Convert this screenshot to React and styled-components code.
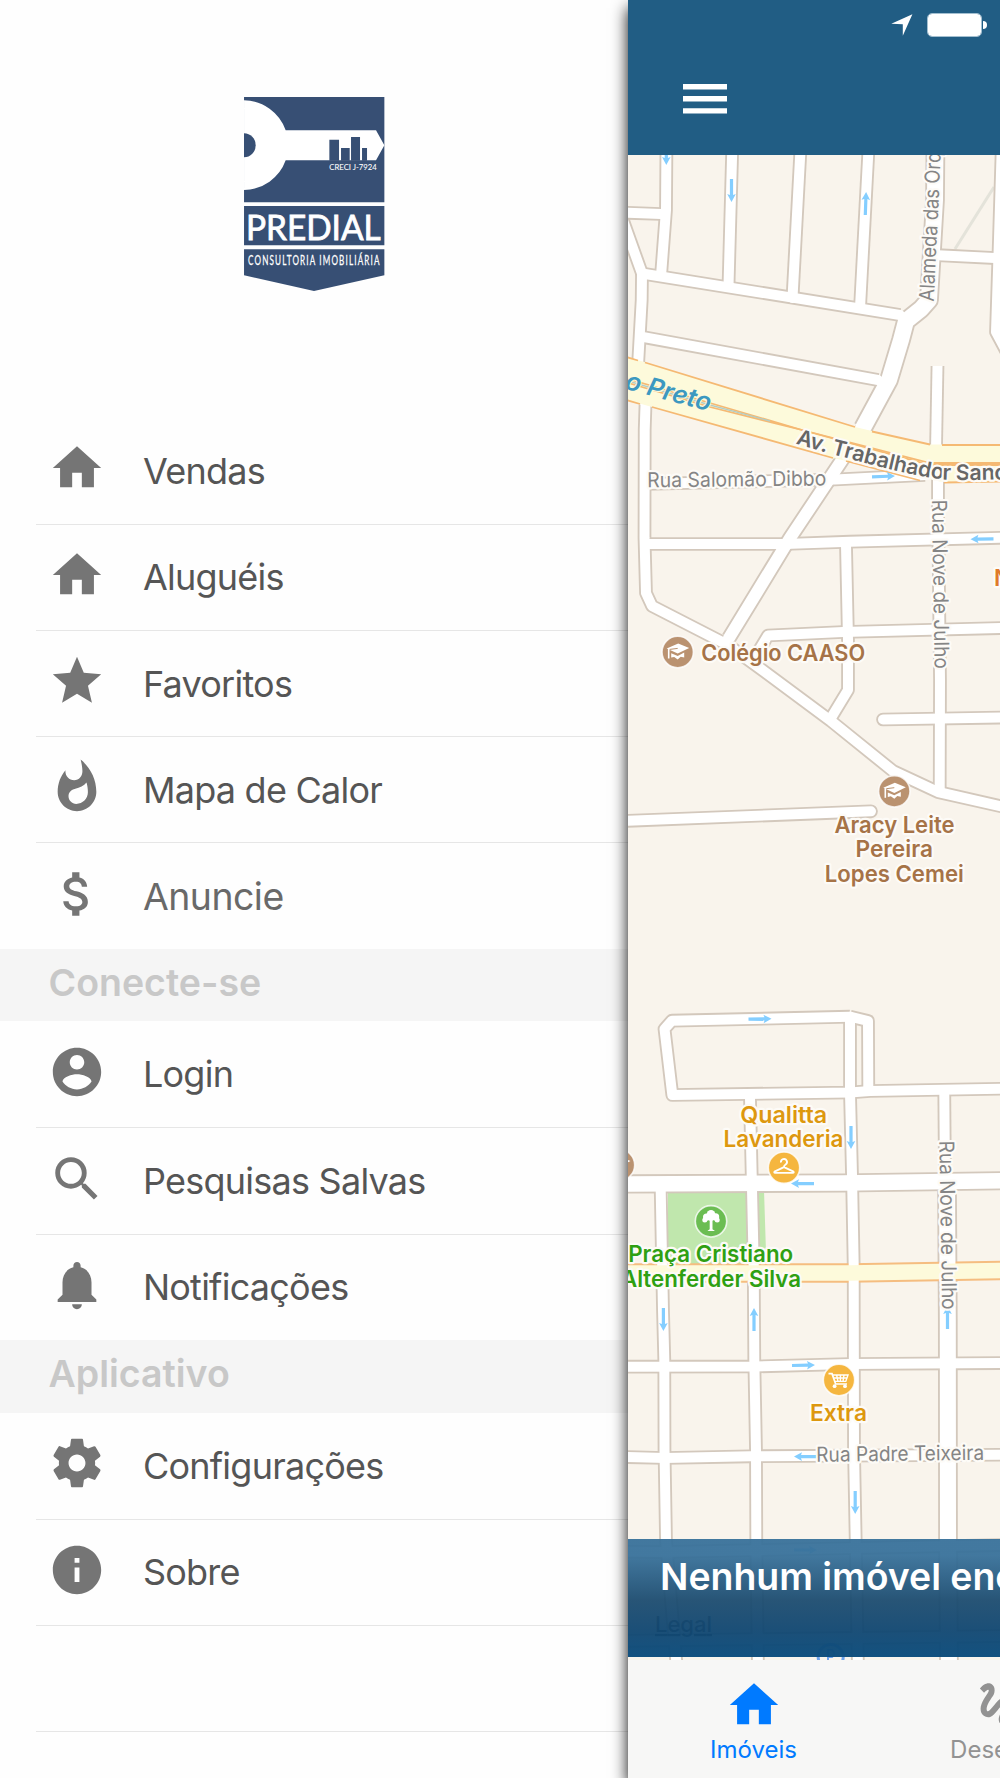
import React from "react";
import styled, { createGlobalStyle } from "styled-components";
import {
	MdHome,
	MdStar,
	MdAttachMoney,
	MdSearch,
	MdInfo,
	MdGesture,
} from "react-icons/md";

const FlameIcon = () => (
	<svg viewBox="0 0 24 24" fill="currentColor">
		<path d="M13.5.67s.74 2.65.74 4.8c0 2.06-1.35 3.73-3.41 3.73-2.07 0-3.63-1.67-3.63-3.73l.03-.36C5.21 7.51 4 10.62 4 14c0 4.42 3.58 8 8 8s8-3.58 8-8C20 8.61 17.41 3.8 13.5.67zM11.71 19c-1.78 0-3.22-1.4-3.22-3.14 0-1.62 1.05-2.76 2.81-3.12 1.77-.36 3.6-1.21 4.62-2.58.39 1.29.59 2.65.59 4.04 0 2.65-2.15 4.8-4.8 4.8z" />
	</svg>
);

const AccountIcon = () => (
	<svg viewBox="0 0 24 24" fill="currentColor">
		<path d="M12 2C6.48 2 2 6.48 2 12s4.48 10 10 10 10-4.48 10-10S17.52 2 12 2zm0 3c1.66 0 3 1.34 3 3s-1.34 3-3 3-3-1.34-3-3 1.34-3 3-3zm0 14.2c-2.5 0-4.71-1.28-6-3.22.03-1.99 4-3.08 6-3.08 1.99 0 5.97 1.09 6 3.08-1.29 1.94-3.5 3.22-6 3.22z" />
	</svg>
);

const BellIcon = () => (
	<svg viewBox="0 0 24 24" fill="currentColor">
		<path d="M12 22c1.1 0 2-.9 2-2h-4c0 1.1.89 2 2 2zm6-6v-5c0-3.07-1.64-5.64-4.5-6.32V4c0-.83-.67-1.5-1.5-1.5s-1.5.67-1.5 1.5v.68C7.63 5.36 6 7.92 6 11v5l-2 2v1h16v-1l-2-2z" />
	</svg>
);

const GearIcon = () => (
	<svg viewBox="0 0 24 24" fill="currentColor">
		<path d="M19.43 12.98c.04-.32.07-.64.07-.98s-.03-.66-.07-.98l2.11-1.65c.19-.15.24-.42.12-.64l-2-3.46c-.12-.22-.39-.3-.61-.22l-2.49 1c-.52-.4-1.08-.73-1.69-.98l-.38-2.65C14.46 2.18 14.25 2 14 2h-4c-.25 0-.46.18-.49.42l-.38 2.65c-.61.25-1.17.59-1.69.98l-2.49-1c-.23-.09-.49 0-.61.22l-2 3.46c-.13.22-.07.49.12.64l2.11 1.65c-.04.32-.07.65-.07.98s.03.66.07.98l-2.11 1.65c-.19.15-.24.42-.12.64l2 3.46c.12.22.39.3.61.22l2.49-1c.52.4 1.08.73 1.69.98l.38 2.65c.03.24.24.42.49.42h4c.25 0 .46-.18.49-.42l.38-2.65c.61-.25 1.17-.59 1.69-.98l2.49 1c.23.09.49 0 .61-.22l2-3.46c.12-.22.07-.49-.12-.64l-2.11-1.65zM12 15.5c-1.93 0-3.5-1.57-3.5-3.5s1.57-3.5 3.5-3.5 3.5 1.57 3.5 3.5-1.57 3.5-3.5 3.5z" />
	</svg>
);

const sections = [
	{
		items: [
			{ label: "Vendas", icon: <MdHome /> },
			{ label: "Aluguéis", icon: <MdHome /> },
			{ label: "Favoritos", icon: <MdStar /> },
			{ label: "Mapa de Calor", icon: <FlameIcon /> },
			{ label: "Anuncie", icon: <MdAttachMoney />, muted: true },
		],
	},
	{
		title: "Conecte-se",
		items: [
			{ label: "Login", icon: <AccountIcon /> },
			{ label: "Pesquisas Salvas", icon: <MdSearch /> },
			{ label: "Notificações", icon: <BellIcon /> },
		],
	},
	{
		title: "Aplicativo",
		items: [
			{ label: "Configurações", icon: <GearIcon /> },
			{ label: "Sobre", icon: <MdInfo /> },
			{ label: "", icon: null },
			{ label: "", icon: null },
		],
	},
];

// [path, white width]
const roads = [
	["M666.5 140L666 210L661 276", 10],
	["M732.5 140L728.5 286", 10],
	["M801 140L792.5 298", 10],
	["M869 140L860 308", 10],
	["M935.5 140L935 200L929 300L921 309L906 321L901 340L889 380L863 428", 16],
	["M863 428L840 463L790 538L729 638", 12],
	["M642 273.5L900 315", 10],
	["M620 212.5L661 214", 10],
	["M620 212L642 273.5", 10],
	["M642 273L641.7 300L638 366", 10],
	["M645.5 405L644.7 430L644.5 538L646 593L652 606L728 645L765 672L831 721L893 771L938 792L1004 807", 10],
	["M644 337.2L878 380", 10],
	["M645 484L835 479.5L925 475", 10],
	["M937.5 366L936 450", 10],
	["M938 478L938 500L940 680L939.7 790", 10],
	["M645 544L785 544L850 541.7L1004 537.7", 10],
	["M846 545L848 640L848 690L831 718", 10],
	["M752 662L768 635.5L843 632L1004 628", 10],
	["M883 719.5L1004 717.5", 10],
	["M618 821.2L871 811.3", 10],
	["M850 1016.7L868 1021L868.3 1090", 10],
	["M850 1016.7L672 1020.7L664.5 1029L672.3 1095L850 1092.5L870 1091L1004 1088.7", 10],
	["M850 1018L850 1093L852 1175L853.7 1265L854 1450L855.7 1540L858 1670", 10],
	["M750 1098L751.7 1175L753.7 1265L754.3 1360L756 1450L756.3 1540L758 1670", 10],
	["M660.7 1190L663 1310L664.3 1360L664.5 1450L666 1540L671 1600L677 1670", 10],
	["M944.3 1095L945 1180", 10],
	["M947 1186L947.8 1320L948 1540L949 1670", 16],
	["M618 1184L843 1183L1004 1180.7", 15.5],
	["M618 1366.7L755 1366.5L850 1364L1004 1363", 10],
	["M618 1456.8L665 1458L750 1456.3L1004 1454.7", 10],
	["M618 1551.7L665 1552L1004 1545", 10],
	["M618 1641L1004 1636", 10],
	["M938 255.2L1004 258.5", 10],
	["M1002 140L998.5 255L996 332L1012 362", 10],
];

// x, y of the tail and the heading in degrees
const arrows = [
	[666.3, 142, 90],
	[731.5, 179, 90],
	[865.3, 215, -88],
	[872, 476.8, -2],
	[993.5, 538.8, 179],
	[748.5, 1019.2, -1],
	[851, 1126, 90],
	[814, 1183.6, 180],
	[663.4, 1308, 90],
	[754, 1331, -90],
	[947.5, 1329, -90],
	[792, 1365.5, -1],
	[817, 1456.6, 180],
	[855.2, 1491, 90],
	[794, 1550, 0],
];

const labels = [
	{ text: "Colégio CAASO", x: 783.2, y: 660.9, w: 164, color: "#a67347" },
	{ text: "Aracy Leite", x: 894.5, y: 832.9, w: 120, color: "#a67347" },
	{ text: "Pereira", x: 894.2, y: 857.4, w: 77.5, color: "#a67347" },
	{ text: "Lopes Cemei", x: 894.3, y: 881.6, w: 139, color: "#a67347" },
	{ text: "Qualitta", x: 783.7, y: 1123, w: 87, color: "#dd980f" },
	{ text: "Lavanderia", x: 783.5, y: 1147.3, w: 120, color: "#dd980f" },
	{ text: "Praça Cristiano", x: 710.7, y: 1261.7, w: 165, color: "#2fa012" },
	{ text: "Altenferder Silva", x: 711, y: 1286.7, w: 180, color: "#2fa012" },
	{ text: "Extra", x: 838.5, y: 1421, w: 57, color: "#dd980f" },
];

const streets = [
	{ text: "Rua Salomão Dibbo", x: 647.3, y: 487.3, rotate: -0.6, w: 179 },
	{ text: "Rua Padre Teixeira", x: 816.3, y: 1461.8, rotate: -0.7, w: 168 },
	{ text: "Rua Nove de Julho", x: 932, y: 499.8, rotate: 89.1, w: 169 },
	{ text: "Rua Nove de Julho", x: 939.3, y: 1140.8, rotate: 89, w: 169 },
	{ text: "Alameda das Orq", x: 933.8, y: 301.8, rotate: -87.3, w: 150 },
];

const CapGlyph = () => (
	<g>
		<path d="M-11 -3.6L0.5 -8.6L11.5 -4L0 1.6Z" fill="#fff" />
		<path d="M-6.5 1.2L0 4L6.5 .6V5.5L3 4.8L0 7.5L-3.5 5L-6.5 5.6Z" fill="#fff" />
		<path d="M-9 -3V6.5" stroke="#fff" strokeWidth="1.6" />
		<path d="M-8 -2.6L0 -3.6" stroke="#ba9270" strokeWidth="1" />
	</g>
);

const HangerGlyph = () => (
	<path
		d="M-3 -5.2A3 3 0 1 1 1.6 -3.2Q0 -2.3 0 -.6L9 3.6Q10.6 5 8.6 5.2H-8.6Q-10.6 5 -9 3.6L0 -.6"
		fill="none"
		stroke="#fff"
		strokeWidth="1.9"
		strokeLinejoin="round"
	/>
);

const TreeGlyph = () => (
	<g fill="#fff">
		<circle cx="0" cy="-7" r="4.3" />
		<circle cx="-4.4" cy="-4.2" r="3.6" />
		<circle cx="4.6" cy="-4.4" r="3.6" />
		<circle cx="-6.2" cy="-1.4" r="2.5" />
		<circle cx="6.2" cy="-1.2" r="2.5" />
		<circle cx="0" cy="-3.4" r="3" />
		<path d="M-1.3 -3H1.5V8L4 9.8H-3.6L-1.3 8Z" />
	</g>
);

const CartGlyph = () => (
	<g fill="none" stroke="#fff" strokeWidth="1.7">
		<path d="M-10.5 -6.4H-7L-3.4 4H8" />
		<path d="M-6.5 -5H9L6.8 1.4H-4.4M-5.6 -2H8M-2.4 -5L-1 1.4M1.4 -5V1.4M5 -5L4 1.4" strokeWidth="1.4" />
		<circle cx="-4.4" cy="6.2" r="1.9" fill="#fff" stroke="none" />
		<circle cx="6" cy="6.2" r="1.9" fill="#fff" stroke="none" />
	</g>
);

const pins = [
	{ x: 677.7, y: 652, color: "#ba9270", glyph: <CapGlyph /> },
	{ x: 894.3, y: 791.3, color: "#ba9270", glyph: <CapGlyph /> },
	{ x: 619, y: 1165, color: "#ba9270", glyph: <CapGlyph /> },
	{ x: 784, y: 1167.7, color: "#f5b63f", glyph: <HangerGlyph /> },
	{ x: 711, y: 1221.3, color: "#6bbd52", glyph: <TreeGlyph /> },
	{ x: 839, y: 1380, color: "#f5b63f", glyph: <CartGlyph /> },
];

const Logo = () => (
	<LogoSvg viewBox="0 0 421 582">
		<g fill="#374f74">
			<path d="M0 0H421V316H0Z" />
			<path d="M0 327H421V445H0Z" />
			<path d="M0 457H421V535L210 582L0 535Z" />
		</g>
		<path d="M0 10A134.5 134.5 0 0 1 125 100H396L421 145L396 190H125A134.5 134.5 0 0 1 0 279Z" fill="#fff" />
		<path d="M0 109A35 36 0 0 1 0 181Z" fill="#374f74" />
		<path d="M256 191V128H285V191ZM291 191V153H317V191ZM321 191V120H348V191ZM354 191V153H369V191Z" fill="#374f74" />
		<LogoText x="256" y="220" fontSize="24" textLength="142" strokeWidth="0.2">
			CRECI J-7924
		</LogoText>
		<LogoText x="6" y="430" fontSize="106" textLength="404" strokeWidth="2.5">
			PREDIAL
		</LogoText>
		<LogoText
			transform="translate(12 503) scale(.58 1)"
			fontSize="42"
			textLength="680"
			strokeWidth="0.8"
			lengthAdjust="spacing"
		>
			CONSULTORIA IMOBILIÁRIA
		</LogoText>
	</LogoSvg>
);

const CityMap = () => (
	<MapSvg viewBox="628 155 372 1505">
		<path d="M668 1190H748V1268H668ZM759 1190H764L766.5 1268H759Z" fill="#c0e7ad" />
		<path d="M994 187L955 249" stroke="#e4e3da" strokeWidth="3" />
		<g fill="none" stroke="#d3c8bc" strokeLinejoin="round">
			{roads.map(([d, w], i) => (
				<path
					key={i}
					d={d}
					strokeWidth={w + 3.7}
					strokeLinecap={d.includes("883 719") || d.includes("871 811") ? "round" : "butt"}
				/>
			))}
		</g>
		<path d="M618 1273H850L1004 1270.5" fill="none" stroke="#f5bd80" strokeWidth="19.5" />
		<g fill="none" stroke="#fff" strokeLinejoin="round">
			{roads.map(([d, w], i) => (
				<path
					key={i}
					d={d}
					strokeWidth={w}
					strokeLinecap={d.startsWith("M937.5") ? "butt" : "round"}
				/>
			))}
		</g>
		<path d="M618 1273H850L1004 1270.5" fill="none" stroke="#fdfadb" strokeWidth="15.5" />

		<path d="M618 354L855 427L930 444.5H1004V481.5H940L833 458L618 397.5Z" fill="#fdfadb" />
		<g fill="none" stroke="#f5b973" strokeWidth="1.8">
			<path d="M618 354.5L638 360.5M645 362.5L855 427" />
			<path d="M872 431.5L930 444.5M942 445H1004" />
			<path d="M618 397.5L640 404M652 407L833 458" />
			<path d="M846 461L920 480.5M944 482.5L1004 481.5" />
			<path d="M618 376L710 403L802 430L930 463H1004" />
			<path d="M618 380L710 407L802 430L930 465H1004" />
		</g>
		<path d="M618 378L710 405L770 421" fill="none" stroke="#b4cdc4" strokeWidth="1.4" />

		{arrows.map(([x, y, deg], i) => (
			<g key={i} transform={`translate(${x} ${y}) rotate(${deg})`} fill="#84ceff">
				<path d="M0 -1.6H16L15 -4.3L23 0L15 4.3L16 1.6H0Z" />
			</g>
		))}

		<Creek transform="translate(709 411.4) rotate(15)" textLength="88" lengthAdjust="spacingAndGlyphs">
			o Preto
		</Creek>
		<path id="avenue" d="M795.5 443.6L823 451.8L857 460.8Q905 474 943 479.6Q960 481 1080 477.6" fill="none" />
		<Avenue>
			<textPath href="#avenue">Av. Trabalhador Sancarlense</textPath>
		</Avenue>

		{streets.map((s, i) => (
			<Street
				key={i}
				transform={`translate(${s.x} ${s.y}) rotate(${s.rotate})`}
				textLength={s.w}
				lengthAdjust="spacingAndGlyphs"
			>
				{s.text}
			</Street>
		))}

		{pins.map((p, i) => (
			<g key={i} transform={`translate(${p.x} ${p.y})`}>
				<circle r="15.7" fill={p.color} stroke="#fffc" strokeWidth="1.6" />
				{p.glyph}
			</g>
		))}

		{labels.map((l) => (
			<Place
				key={l.text}
				x={l.x}
				y={l.y}
				fill={l.color}
				textLength={l.w}
				lengthAdjust="spacingAndGlyphs"
			>
				{l.text}
			</Place>
		))}
		<Place x="1002.5" y="586" fill="#e07a2a">N</Place>

		<circle cx="830.7" cy="1657" r="12.5" fill="none" stroke="#6fa3ec" strokeWidth="3" />
		<path d="M828 1664V1650H832A4 4 0 0 1 832 1657H828" fill="none" stroke="#6fa3ec" strokeWidth="2" />
		<Legal x="655" y="1632" textLength="57">Legal</Legal>
	</MapSvg>
);

const App = () => (
	<>
		<GlobalStyle />
		<Screen>
			<Drawer>
				<LogoBox>
					<Logo />
				</LogoBox>
				{sections.map((section, i) => (
					<div key={i}>
						{section.title && <SectionTitle>{section.title}</SectionTitle>}
						{section.items.map((item, j) => (
							<MenuItem key={j}>
								<MenuIcon>{item.icon}</MenuIcon>
								<MenuLabel $muted={item.muted}>{item.label}</MenuLabel>
							</MenuItem>
						))}
					</div>
				))}
			</Drawer>
			<Panel>
				<Header>
					<StatusBar>
						<svg width="22" height="22" viewBox="0 0 22 22">
							<path d="M.3 9.8L21.4 .2L11.8 21.7V10.3Z" fill="#fff" />
						</svg>
						<Battery />
					</StatusBar>
					<MenuButton viewBox="0 0 44 30">
						<path d="M0 0H44V5.4H0ZM0 12.1H44V17.5H0ZM0 24.2H44V29.6H0Z" fill="#fff" />
					</MenuButton>
				</Header>
				<MapArea>
					<CityMap />
					<Notice>Nenhum imóvel encontrado</Notice>
				</MapArea>
				<TabBar>
					<Tab $active>
						<MdHome />
						Imóveis
					</Tab>
					<Tab>
						<GestureIcon />
						Desenhar
					</Tab>
				</TabBar>
			</Panel>
		</Screen>
	</>
);
export default App;

const GlobalStyle = createGlobalStyle`
	* {
		box-sizing: border-box;
	}
	body {
		margin: 0;
		background: #fff;
		font-family: Inter, "Liberation Sans", sans-serif;
	}
`;

const Screen = styled.div`
	display: grid;
	grid-template-columns: 628px 372px;
	width: 1000px;
	height: 1778px;
	overflow: hidden;
`;

const Drawer = styled.nav`
	height: 1778px;
	overflow: hidden;
	background: #fefefe;
`;

const LogoBox = styled.div`
	height: 417.4px;
	padding-top: 96.5px;
	display: flex;
	justify-content: center;
	align-items: flex-start;
`;

const LogoSvg = styled.svg`
	width: 140.4px;
	height: 194px;
	overflow: visible;
`;

const LogoText = styled.text.attrs(({ lengthAdjust }) => ({
	lengthAdjust: lengthAdjust || "spacingAndGlyphs",
}))`
	fill: #fff;
	stroke: #fff;
	font-family: Lato, sans-serif;
`;

const SectionTitle = styled.h2`
	margin: 0;
	height: 72.6px;
	padding: 0 0 5px 48.5px;
	display: flex;
	align-items: center;
	background: #f5f5f5;
	color: #c8c8c8;
	font-size: 37.5px;
	font-weight: 600;
`;

const MenuItem = styled.div`
	height: 106.25px;
	margin-left: 36px;
	padding-left: 12.4px;
	display: flex;
	align-items: center;
	gap: 36.5px;

	& + & {
		border-top: 1px solid #e6e6e6;
	}
`;

const MenuIcon = styled.span`
	width: 58px;
	height: 58px;
	margin-bottom: 5px;
	color: #757575;

	svg {
		display: block;
		width: 58px;
		height: 58px;
	}
`;

const MenuLabel = styled.span`
	color: ${({ $muted }) => ($muted ? "#696969" : "#555")};
	font-size: ${({ $muted }) => ($muted ? "37.4px" : "36px")};
	letter-spacing: ${({ $muted }) => ($muted ? "-0.5px" : "-0.75px")};
`;

const Panel = styled.main`
	position: relative;
	display: flex;
	flex-direction: column;
	box-shadow: 0 8px 15px rgba(0, 0, 0, 0.95);
`;

const Header = styled.header`
	height: 155px;
	background: #215d84;
`;

const StatusBar = styled.div`
	height: 49px;
	padding: 0 18px 0 0;
	display: flex;
	align-items: center;
	justify-content: flex-end;
	gap: 14px;
`;

const Battery = styled.div`
	width: 55px;
	height: 24px;
	border: 1.5px solid #a3bfd0;
	border-radius: 5px;
	background: #fff;
	background-clip: padding-box;
	position: relative;

	&::after {
		content: "";
		position: absolute;
		right: -6px;
		top: 7px;
		width: 4px;
		height: 8px;
		border-radius: 0 4px 4px 0;
		background: #fff;
	}
`;

const MenuButton = styled.svg`
	display: block;
	width: 44px;
	height: 30px;
	margin: 35.4px 0 0 55.3px;
`;

const MapArea = styled.section`
	height: 1505px;
	position: relative;
	background: #f9f4ec;
`;

const MapSvg = styled.svg`
	display: block;
	width: 372px;
	height: 1505px;
	overflow: hidden;
`;

const MapText = styled.text`
	paint-order: stroke;
	stroke: #fdfbf7;
	stroke-width: 4.5px;
	stroke-linejoin: round;
`;

const Place = styled(MapText)`
	font-size: 22.6px;
	font-weight: 600;
	text-anchor: middle;
`;

const Street = styled(MapText)`
	fill: #858585;
	font-size: 20.6px;
`;

const Avenue = styled(MapText)`
	fill: #666;
	font-size: 21.4px;
	font-weight: 600;
	letter-spacing: -0.2px;
`;

const Creek = styled(MapText)`
	fill: #3c98c0;
	stroke: #fdfadb;
	stroke-width: 2px;
	font-size: 25.4px;
	font-style: italic;
	font-weight: 600;
	text-anchor: end;
`;

const Legal = styled.text`
	fill: #222;
	opacity: 0.8;
	font-size: 22px;
	font-weight: 500;
	text-decoration: underline;
`;

const Notice = styled.div`
	position: absolute;
	left: 0;
	right: 0;
	bottom: 3px;
	height: 118px;
	padding: 14.5px 0 0 32px;
	overflow: hidden;
	white-space: nowrap;
	color: #fff;
	font-size: 37.4px;
	font-weight: 600;
	background: linear-gradient(
		rgba(56, 113, 154, 0.95) 0%,
		rgba(56, 113, 154, 0.95) 14%,
		rgba(28, 76, 112, 0.95) 52%,
		rgba(15, 70, 113, 0.95) 78%,
		rgba(14, 78, 125, 0.98) 100%
	);
`;

const TabBar = styled.footer`
	height: 118px;
	display: flex;
	overflow: hidden;
	background: #f7f7f6;
`;

const Tab = styled.div`
	flex: 0 0 251px;
	padding-top: 16px;
	display: flex;
	flex-direction: column;
	align-items: center;
	color: ${({ $active }) => ($active ? "#007aff" : "#929292")};
	font-size: 24px;
	line-height: 28px;

	svg {
		width: 58px;
		height: 58px;
		margin-bottom: 2px;
	}
`;

const GestureIcon = styled(MdGesture)`
	margin-right: 5px;
`;
